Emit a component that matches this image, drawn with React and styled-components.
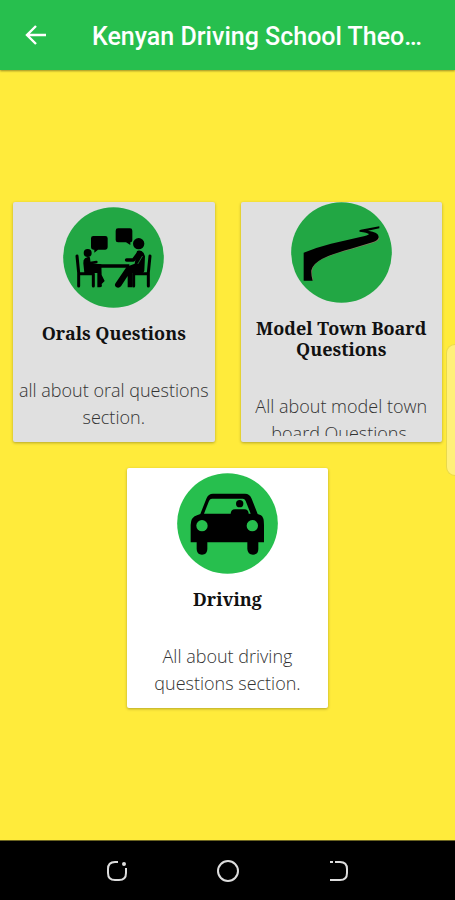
import React from "react";
import styled, { createGlobalStyle } from "styled-components";

const GlobalStyle = createGlobalStyle`
  * {
    box-sizing: border-box;
  }
  body {
    margin: 0;
    background: #ffeb3b;
  }
`;

const Screen = styled.div`
  position: relative;
  display: flex;
  flex-direction: column;
  min-height: 100vh;
  background: #ffeb3b;
`;

const TopBar = styled.header`
  display: flex;
  align-items: center;
  gap: 42px;
  height: 70px;
  padding: 0 22px;
  background: #27bf4e;
  box-shadow: 0 1px 2px rgba(0, 0, 0, 0.4);
`;

const BackButton = styled.button`
  display: flex;
  flex: none;
  padding: 0;
  border: 0;
  background: none;
  color: #fff;
`;

const Title = styled.h1`
  margin: 0;
  padding-top: 3px;
  overflow: hidden;
  white-space: nowrap;
  color: #fff;
  font: 500 25px/32px Roboto, sans-serif;
`;

const Menu = styled.main`
  display: flex;
  flex: 1;
  flex-wrap: wrap;
  align-content: center;
  justify-content: center;
`;

const Cell = styled.div`
  width: 50%;
  padding: 13px;
`;

const Card = styled.a`
  display: block;
  height: 240px;
  padding-bottom: 6px;
  border-radius: 2px;
  background: ${props => (props.$pressed ? "#e0e0e0" : "#fff")};
  box-shadow: 0 1px 3px rgba(0, 0, 0, 0.3);
  color: #111;
  text-align: center;
  text-decoration: none;
`;

const CardBody = styled.div`
  display: flex;
  flex-direction: column;
  align-items: center;
  justify-content: safe center;
  height: 100%;
  padding: 0 2px;
  overflow: hidden;
`;

const Picture = styled.svg`
  flex: none;
  width: 101px;
  height: 101px;
`;

const Disc = styled.circle`
  fill: ${props => (props.$pressed ? "#22a744" : "#27bf4e")};
`;

const Heading = styled.h2`
  flex: none;
  margin: 15px 0 33px;
  font: bold 18px/21px "Noto Serif", "DejaVu Serif Condensed", "DejaVu Serif",
    serif;
`;

const Description = styled.p`
  flex: none;
  margin: 0;
  color: #333;
  font: 300 18px/27px "Coming Soon", "Open Sans", sans-serif;
`;

const EdgeHandle = styled.div`
  position: absolute;
  top: 344px;
  right: 0;
  width: 9px;
  height: 132px;
  border: 1px solid #e9d94a;
  border-right: 0;
  border-radius: 9px 0 0 9px;
  background: #fff07a;
`;

const NavBar = styled.nav`
  display: flex;
  align-items: center;
  justify-content: center;
  gap: 87px;
  height: 60px;
  border-top: 1px solid #6b6420;
  background: #000;
`;

const NavButton = styled.button`
  display: flex;
  padding: 0;
  border: 0;
  background: none;
  color: #ddd;
`;

const NavIcon = ({ children }) => (
  <svg
    width="24"
    height="24"
    viewBox="0 0 24 24"
    fill="none"
    stroke="currentColor"
    strokeWidth="2"
  >
    {children}
  </svg>
);

const TableTalk = () => (
  <g stroke="#000" strokeLinecap="round" strokeLinejoin="round">
    <path
      stroke="none"
      d="M91 87h36q7 0 7 7v27q0 7-7 7h-22l-11 9v-9h-3q-7 0-7-7V94q0-7 7-7z"
    />
    <path
      stroke="none"
      d="M165 64h36q7 0 7 7v29q0 6-6 6v8l-13-8h-24q-7 0-7-7V71q0-7 7-7z"
    />
    <circle cx="74" cy="138" r="12" stroke="none" />
    <circle cx="227" cy="110" r="17" stroke="none" />
    <path fill="none" strokeWidth="9" d="M42 147l5 50v40M47 200h44v37" />
    <path fill="none" strokeWidth="9" d="M261 147l-5 50v40M256 200h-44v37" />
    <path fill="none" strokeWidth="11" strokeLinecap="butt" d="M103 177h96" />
    <path stroke="none" d="M66 154q-6 4-5 15l3 29h39v43h8q8 0 5-10l9-9-9-18-1-32-32-3-2-17q-2-7-15 2z" />
    <path fill="none" strokeWidth="8" d="M75 157l2 12 23-4" />
    <path stroke="none" d="M222 132q12-4 20 6l4 10-2 43q-2 8-12 8h-24v42h-14v-34l-20 31q-7 7-15 2-6-5-1-12l33-49 24-9z" />
    <path fill="none" strokeWidth="11" d="M228 137l-17 22h-20" />
    <path fill="none" stroke="#22a744" strokeWidth="2" d="M238 148l-13 22" />
  </g>
);

const Road = () => (
  <g>
    <path
      fill="none"
      stroke="#8a7a60"
      strokeWidth="4"
      d="M65 235q-6-16-3-32 4-20 34-35 30-14 84-28l64-19q16-5 20-14"
    />
    <path d="M38 152q42-17 82-27l88-20q24-5 26-9-5-4-28-7-3-4 3-6l56-10v6l-34 7q32 4 32 19 0 10-19 16l-64 19q-56 15-86 30-30 16-33 35-1 15 4 31H38z" />
  </g>
);

const Car = () => (
  <g>
    <path d="M41 208v-52q0-23 19-29l10-4 18-46q6-15 20-15h96q14 0 20 15l18 46 10 4q9 5 9 29v52h-17v20q0 17-16 17t-17-17v-20H91v20q0 17-16 17t-16-17v-20z" />
    <Disc as="path" d="M81 122l15-38q3-7 9-7h92q6 0 9 7l15 38z" />
    <Disc cx="75" cy="158" r="17" />
    <Disc cx="226" cy="158" r="17" />
    <circle cx="188" cy="92" r="11" />
    <path d="M161 123q0-14 13-14h28q13 0 13 14z" />
  </g>
);

const sections = [
  {
    title: "Orals Questions",
    text: "all about oral questions section.",
    href: "#orals",
    icon: TableTalk,
    pressed: true
  },
  {
    title: "Model Town Board Questions",
    text: "All about model town board Questions.",
    href: "#model-town",
    icon: Road,
    pressed: true
  },
  {
    title: "Driving",
    text: "All about driving questions section.",
    href: "#driving",
    icon: Car,
    pressed: false
  }
];

export default () => (
  <Screen>
    <GlobalStyle />
    <TopBar>
      <BackButton aria-label="Back">
        <svg
          width="28"
          height="28"
          viewBox="0 0 28 28"
          fill="none"
          stroke="currentColor"
          strokeWidth="2.4"
        >
          <path d="M24 14H6M14 5l-9 9 9 9" />
        </svg>
      </BackButton>
      <Title>Kenyan Driving School Theo…</Title>
    </TopBar>
    <Menu>
      {sections.map(({ title, text, href, icon: Icon, pressed }) => (
        <Cell key={title}>
          <Card href={href} $pressed={pressed}>
            <CardBody>
              <Picture viewBox="0 0 303 303" aria-hidden="true">
                <Disc cx="151.5" cy="151.5" r="151" $pressed={pressed} />
                <Icon />
              </Picture>
              <Heading>{title}</Heading>
              <Description>{text}</Description>
            </CardBody>
          </Card>
        </Cell>
      ))}
    </Menu>
    <EdgeHandle />
    <NavBar>
      <NavButton aria-label="Recent apps">
        <NavIcon>
          <path d="M13 3h-3q-7 0-7 7v4q0 7 7 7h4q7 0 7-7V9" />
          <circle cx="19" cy="5" r="1" />
        </NavIcon>
      </NavButton>
      <NavButton aria-label="Home">
        <NavIcon>
          <circle cx="12" cy="12" r="10" />
        </NavIcon>
      </NavButton>
      <NavButton aria-label="Go back">
        <NavIcon>
          <path d="M3 3h3M8 3h5q7 0 7 7v4q0 7-7 7H3" />
        </NavIcon>
      </NavButton>
    </NavBar>
  </Screen>
);
